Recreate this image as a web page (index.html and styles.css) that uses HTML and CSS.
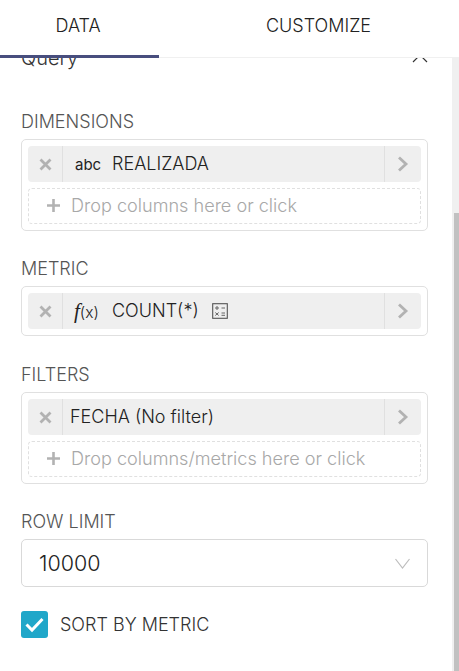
FILE: index.html
```html
<!DOCTYPE html>
<html lang="en">
<head>
<meta charset="utf-8">
<title>Query controls</title>
<link rel="stylesheet" href="styles.css">
</head>
<body>
<div class="page">
  <nav class="tabs">
    <div class="tab tab-active">DATA</div>
    <div class="tab tab-second">CUSTOMIZE</div>
  </nav>
  <div class="panel">
    <main class="content">
      <div class="section-head">
        <span class="section-title">Query</span>
        <svg class="collapse" width="16" height="10" viewBox="0 0 16 10"><path d="M1 9 L8 2 L15 9" fill="none" stroke="#333" stroke-width="1.2"/></svg>
      </div>

      <div class="control control-first">
        <div class="label">DIMENSIONS</div>
        <div class="box">
          <div class="chip">
            <span class="chip-x"><svg width="13" height="13" viewBox="0 0 13 13"><path d="M1.5 1.5 L11.5 11.5 M11.5 1.5 L1.5 11.5" stroke="#b2b2b2" stroke-width="2.8"/></svg></span>
            <span class="chip-body"><span class="type-abc">abc</span><span class="chip-text">REALIZADA</span></span>
            <span class="chip-arrow"><svg width="12" height="16" viewBox="0 0 12 16"><path d="M2 1.5 L9 8 L2 14.5" fill="none" stroke="#b2b2b2" stroke-width="2.8"/></svg></span>
          </div>
          <div class="drop"><svg width="15" height="15" viewBox="0 0 15 15"><path d="M7.5 1 V14 M1 7.5 H14" stroke="#b2b2b2" stroke-width="2.6"/></svg><span>Drop columns here or click</span></div>
        </div>
      </div>

      <div class="control control-metric">
        <div class="label">METRIC</div>
        <div class="box">
          <div class="chip">
            <span class="chip-x"><svg width="13" height="13" viewBox="0 0 13 13"><path d="M1.5 1.5 L11.5 11.5 M11.5 1.5 L1.5 11.5" stroke="#b2b2b2" stroke-width="2.8"/></svg></span>
            <span class="chip-body chip-body-fx"><span class="type-fx"><i>f</i><span class="fx-arg">(x)</span></span><span class="chip-text">COUNT(*)</span>
              <svg class="calc" width="16" height="16" viewBox="0 0 16 16"><rect x="0.7" y="0.7" width="14.6" height="14.6" fill="none" stroke="#555" stroke-width="1.1"/><path d="M3 5 H7 M5 3 V7 M9.5 5 H13 M3.3 9.5 L6.7 12.5 M6.7 9.5 L3.3 12.5 M9.5 10 H13 M9.5 12.3 H13" stroke="#666" stroke-width="1"/></svg>
            </span>
            <span class="chip-arrow"><svg width="12" height="16" viewBox="0 0 12 16"><path d="M2 1.5 L9 8 L2 14.5" fill="none" stroke="#b2b2b2" stroke-width="2.8"/></svg></span>
          </div>
        </div>
      </div>

      <div class="control control-filters">
        <div class="label">FILTERS</div>
        <div class="box">
          <div class="chip">
            <span class="chip-x"><svg width="13" height="13" viewBox="0 0 13 13"><path d="M1.5 1.5 L11.5 11.5 M11.5 1.5 L1.5 11.5" stroke="#b2b2b2" stroke-width="2.8"/></svg></span>
            <span class="chip-body chip-body-plain"><span class="chip-text">FECHA (No filter)</span></span>
            <span class="chip-arrow"><svg width="12" height="16" viewBox="0 0 12 16"><path d="M2 1.5 L9 8 L2 14.5" fill="none" stroke="#b2b2b2" stroke-width="2.8"/></svg></span>
          </div>
          <div class="drop"><svg width="15" height="15" viewBox="0 0 15 15"><path d="M7.5 1 V14 M1 7.5 H14" stroke="#b2b2b2" stroke-width="2.6"/></svg><span>Drop columns/metrics here or click</span></div>
        </div>
      </div>

      <div class="control control-limit">
        <div class="label">ROW LIMIT</div>
        <div class="select">
          <span>10000</span>
          <svg width="17" height="11" viewBox="0 0 17 11"><path d="M1.5 1 L8.5 10 L15.5 1" fill="none" stroke="#bdbdbd" stroke-width="1.2"/></svg>
        </div>
      </div>

      <div class="check-row">
        <span class="checkbox"><svg width="21" height="17" viewBox="0 0 21 17"><path d="M2.5 8.5 L8 14 L18.5 3" fill="none" stroke="#fff" stroke-width="3"/></svg></span>
        <span class="check-label">SORT BY METRIC</span>
      </div>
    </main>
    <div class="scrollbar"><div class="thumb"></div></div>
  </div>
</div>
</body>
</html>
```
FILE: styles.css
```css
* { box-sizing: border-box; }
html, body { margin: 0; padding: 0; height: 100%; background: #fff; }
body { font-family: Inter, "Liberation Sans", sans-serif; font-weight: 300; color: #323232; overflow: hidden; }

.page { display: flex; flex-direction: column; width: 459px; height: 671px; }

.tabs { flex: none; height: 58px; display: flex; border-bottom: 1px solid #f0f0f0; position: relative; z-index: 1; background: #fff; }
.tab { height: 58px; padding-top: 16px; line-height: 20px; font-size: 18px; text-align: center; color: #222; }
.tab-active { width: 159px; padding-right: 3px; border-bottom: 3px solid #484e7e; }
.tab-second { width: 300px; padding-left: 19px; white-space: nowrap; }

.panel { flex: 1; display: flex; min-height: 0; }
.content { width: 452px; flex: none; padding: 0 24px 0 21px; overflow: hidden; }

.section-head { height: 20px; margin-top: -10px; display: flex; justify-content: space-between; align-items: center; }
.section-title { font-size: 20px; line-height: 20px; color: #333; }

.label { font-size: 18px; line-height: 20px; color: #555; padding-top: 1px; margin-bottom: 7px; height: 21px; }
.control-first { margin-top: 43px; }
.control-metric { margin-top: 27px; }
.control-filters { margin-top: 28px; }
.control-limit { margin-top: 27px; }

.box { width: 407px; border: 1px solid #e0e0e0; border-radius: 5px; padding: 6px; display: flex; flex-direction: column; gap: 6px; }

.chip { height: 36px; display: flex; align-items: stretch; background: #efefef; border-radius: 4px; font-size: 18px; color: #222; }
.chip-x { width: 35px; flex: none; display: flex; align-items: center; justify-content: center; border-right: 1px solid #e0e0e0; }
.chip-body { flex: 1; display: flex; align-items: center; padding-left: 12px; }
.chip-body-fx { padding-left: 11px; }
.chip-body-plain { padding-left: 7px; }
.chip-text { line-height: 20px; white-space: nowrap; }
.chip-arrow { width: 37px; flex: none; display: flex; align-items: center; justify-content: center; border-left: 1px solid #e0e0e0; }

.type-abc { font-size: 15px; width: 37px; flex: none; font-weight: 400; color: #222; }
.type-fx { width: 38px; flex: none; color: #222; font-family: "Liberation Serif", serif; font-size: 18px; font-weight: 400; }
.type-fx i { font-size: 21px; }
.fx-arg { font-family: Inter, sans-serif; font-size: 15.5px; font-weight: 300; }
.calc { margin-left: 13px; }

.drop { height: 36px; display: flex; align-items: center; gap: 10px; padding: 0 0 2px 17px; border: 1px dashed #e0e0e0; border-radius: 4px; color: #a8a8a8; font-size: 18.1px; white-space: nowrap; }

.select { width: 407px; height: 48px; display: flex; align-items: center; justify-content: space-between; padding: 0 16px 0 17px; border: 1px solid #d9d9d9; border-radius: 5px; font-size: 21.5px; color: #222; }

.check-row { display: flex; align-items: center; gap: 12px; margin-top: 24px; }
.checkbox { width: 27px; height: 27px; flex: none; background: #20a7c9; border-radius: 3px; display: flex; align-items: center; justify-content: center; }
.check-label { font-size: 18px; color: #333; line-height: 20px; }

.scrollbar { width: 7px; flex: none; background: #f0f0f0; padding: 155px 0 0 2px; }
.thumb { width: 5px; height: 458px; background: #c1c1c1; }
```
